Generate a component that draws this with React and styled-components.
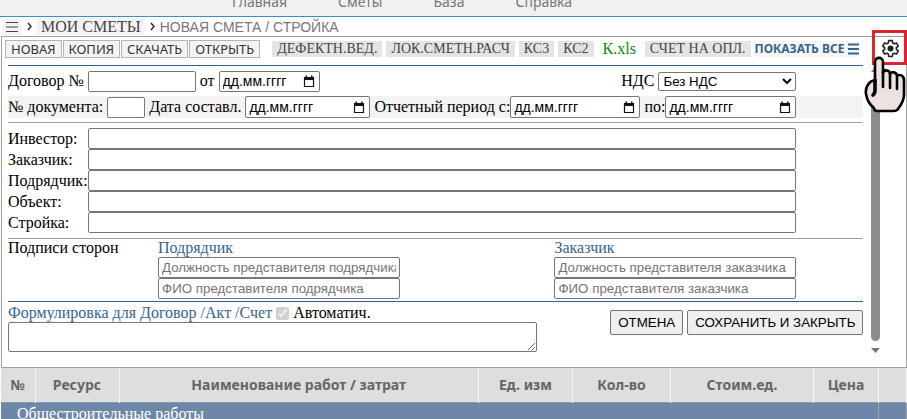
import styled, { createGlobalStyle } from "styled-components";
import React, { useState } from "react";

const GlobalStyle = createGlobalStyle`
  * {
    box-sizing: border-box;
  }
  body {
    margin: 0;
    background: #fff;
    color: #000;
    font-family: "Liberation Serif", serif;
    font-size: 16px;
  }
  input, select, textarea, button {
    margin: 0;
    font-family: "Liberation Sans", sans-serif;
  }
`;
const Page = styled.div`
  height: 100vh;
  overflow: hidden;
`;
const Nav = styled.nav`
  display: flex;
  align-items: flex-end;
  gap: 51px;
  height: 17px;
  padding: 0 0 4px 232px;
  background: #f1f1f1;
  border-bottom: 1px solid #3a8fc0;
`;
const NavLink = styled.a`
  font-family: "Noto Sans", sans-serif;
  font-size: 14px;
  line-height: 20px;
  color: #777;
  text-decoration: none;
`;
const Crumbs = styled.div`
  display: flex;
  align-items: center;
  gap: 5px;
  height: 19px;
  padding-left: 2px;
`;
const CrumbLink = styled.a`
  display: flex;
  align-items: center;
  height: 17px;
  padding: 0 4px;
  background: #f3f3f3;
  color: #444;
  text-decoration: none;
`;
const CrumbText = styled.span`
  font-family: "Liberation Sans", sans-serif;
  font-size: 14px;
  color: #777;
`;
const Panel = styled.section`
  position: relative;
  display: flex;
  margin-left: 1px;
  border: 1px solid #a0a0a0;
`;
const Body = styled.form`
  flex: 1;
  padding: 3px 8px 15px 6px;
`;
const Toolbar = styled.div`
  display: flex;
  align-items: center;
  gap: 4px;
  height: 18px;
  margin: 0 -6px 7px -3px;
`;
const ToolButtons = styled.div`
  display: flex;
  gap: 1px;
  margin-right: 8px;
`;
const ToolButton = styled.button`
  height: 18px;
  padding: 0 5px;
  background: #f3f3f3;
  border: 1px solid #b4b4b4;
  color: #333;
  font-family: "Noto Sans", sans-serif;
  font-size: 13px;
  line-height: 16px;
`;
const DocLink = styled.a`
  height: 16px;
  padding: 0 5px;
  background: ${(props) => (props.$plain ? "transparent" : "#e4e4e4")};
  color: ${(props) => (props.$plain ? "#0a8a0a" : "#444")};
  font-size: ${(props) => (props.$plain ? "16px" : "14px")};
  line-height: 16px;
  white-space: nowrap;
  text-decoration: none;
`;
const ShowAll = styled.button`
  display: flex;
  align-items: center;
  gap: 4px;
  padding: 0;
  border: 0;
  background: #f6f6f6;
  color: #36648f;
  font-family: "Noto Sans", sans-serif;
  font-size: 12px;
  font-weight: bold;
  line-height: 16px;
  white-space: nowrap;
`;
const Rule = styled.hr`
  height: 1px;
  margin: 0;
  border: 0;
  background: ${(props) => (props.$blue ? "#3a6088" : "#a0a0a0")};
`;
const Row = styled.div`
  display: flex;
  align-items: center;
  gap: 4px;
  height: 22px;
  margin: 4px 0;
  padding-right: 67px;
  background: ${(props) => (props.$shaded ? "#f3f3f3" : "transparent")};
  white-space: nowrap;
`;
const Pair = styled.div`
  display: flex;
  align-items: center;
  gap: ${(props) => (props.$gap ? props.$gap : 0)}px;
  margin-left: ${(props) => (props.$end ? "auto" : 0)};
`;
const TextInput = styled.input`
  width: ${(props) => (props.$width ? props.$width + "px" : "100%")};
  height: 21px;
  padding: 1px 3px;
  background: #fff;
  border: 1px solid #767676;
  border-radius: 2px;
  &::placeholder {
    color: #757575;
  }
`;
const DateBox = styled.span`
  display: flex;
  align-items: center;
  width: ${(props) => props.$width}px;
  height: ${(props) => (props.$tall ? 22 : 21)}px;
  padding: 0 4px 0 3px;
  background: #fff;
  border: 1px solid #767676;
  border-radius: 2px;
`;
const DateInput = styled.input`
  flex: 1;
  min-width: 0;
  padding: 0;
  border: 0;
  background: none;
  outline: none;
  font-size: 14px;
  &::placeholder {
    color: #000;
  }
`;
const Select = styled.select`
  width: 138px;
  height: 19px;
  background: #fff;
  border: 1px solid #767676;
  border-radius: 2px;
`;
const Parties = styled.div`
  display: grid;
  grid-template-columns: 80px 1fr;
  grid-auto-rows: 21px;
  align-items: center;
  margin: 5px 67px 5px 0;
  white-space: nowrap;
`;
const Signatures = styled.div`
  display: flex;
  height: 62px;
  padding-right: 67px;
`;
const SignTitle = styled.div`
  width: 150px;
  line-height: 18px;
`;
const SignColumn = styled.div`
  width: 242px;
  margin-left: ${(props) => (props.$end ? "auto" : 0)};
`;
const Blue = styled.div`
  color: #36648f;
  line-height: 18px;
`;
const Footer = styled.div`
  display: flex;
  justify-content: space-between;
`;
const Wording = styled.div`
  width: 529px;
`;
const WordingHead = styled.div`
  display: flex;
  align-items: center;
  gap: 4px;
  height: 20px;
  padding-top: 2px;
`;
const Checkbox = styled.input`
  width: 13px;
  height: 13px;
`;
const TextArea = styled.textarea`
  display: block;
  width: 100%;
  height: 30px;
  border: 1px solid #767676;
  border-radius: 2px;
`;
const Actions = styled.div`
  display: flex;
  gap: 4px;
  padding-top: 8px;
`;
const ActionButton = styled.button`
  height: 25px;
  padding: 0 7px;
  background: #efefef;
  border: 1px solid #767676;
  border-radius: 2px;
  color: #000;
`;
const Scrollbar = styled.div`
  display: flex;
  flex-direction: column;
  align-items: center;
  gap: 7px;
  width: 9px;
  margin: 30px 26px 14px 0;
`;
const Thumb = styled.div`
  flex: 1;
  width: 9px;
  border-radius: 5px;
  background: #8b8b8b;
`;
const SettingsButton = styled.button`
  position: absolute;
  top: -7px;
  right: -1px;
  display: flex;
  align-items: center;
  justify-content: center;
  width: 35px;
  height: 35px;
  padding: 2px 0 0 2px;
  background: none;
  border: 3px solid #e0222d;
`;
const Pointer = styled.svg`
  position: absolute;
  top: 19px;
  right: 0;
`;
const Table = styled.table`
  width: calc(100% - 1px);
  margin-left: 1px;
  border-collapse: collapse;
  table-layout: fixed;
`;
const HeadCell = styled.th`
  width: ${(props) => (props.$width ? props.$width + "px" : "auto")};
  height: 34px;
  padding: 0;
  background: #dedede;
  border-right: 1px solid #f4f4f4;
  color: #666;
  font-family: "Noto Sans", sans-serif;
  font-size: 14px;
`;
const GroupCell = styled.td`
  height: 24px;
  padding: 0 0 0 16px;
  background: #6d87a9;
  border-top: 1px solid #8d99a5;
  border-right: 1px solid #a0a0a0;
  color: #fff;
  line-height: 20px;
`;

const navItems = ["Главная", "Сметы", "База", "Справка"];
const tools = ["НОВАЯ", "КОПИЯ", "СКАЧАТЬ", "ОТКРЫТЬ"];
const documents = [
  { text: "ДЕФЕКТН.ВЕД." },
  { text: "ЛОК.СМЕТН.РАСЧ" },
  { text: "КС3" },
  { text: "КС2" },
  { text: "К.xls", plain: true },
  { text: "СЧЕТ НА ОПЛ." },
];
const parties = ["Инвестор", "Заказчик", "Подрядчик", "Объект", "Стройка"];
const columns = [
  { text: "№", width: 34 },
  { text: "Ресурс", width: 84 },
  { text: "Наименование работ / затрат" },
  { text: "Ед. изм", width: 94 },
  { text: "Кол-во", width: 98 },
  { text: "Стоим.ед.", width: 143 },
  { text: "Цена", width: 65 },
  { text: "", width: 28 },
];

const MenuIcon = ({ size, color, weight }) => (
  <svg width={size} height="12" viewBox={`0 0 ${size} 12`}>
    <path
      d={`M0 1.5H${size}M0 6H${size}M0 10.5H${size}`}
      stroke={color}
      strokeWidth={weight}
    />
  </svg>
);

const Chevron = () => (
  <svg width="5" height="9" viewBox="0 0 5 9">
    <path d="M1 1L4 4.5L1 8" fill="none" stroke="#222" strokeWidth="1.4" />
  </svg>
);

const CalendarIcon = () => (
  <svg width="12" height="13" viewBox="0 0 12 13">
    <path d="M1.5 2.5h9v9h-9z" fill="none" stroke="#111" strokeWidth="1.2" />
    <path d="M1 2h10v3H1zM2.5 0.5h1.5v2H2.5zM8 0.5h1.5v2H8z" fill="#111" />
  </svg>
);

const GearIcon = () => (
  <svg width="19" height="19" viewBox="0 0 24 24">
    <path
      d="M9.7 2h4.6l.5 3.1 1.8 1 2.9-1.1 2.3 4-2.4 2v2l2.4 2-2.3 4-2.9-1.1-1.8 1-.5 3.1H9.7l-.5-3.1-1.8-1-2.9 1.1-2.3-4 2.4-2v-2l-2.4-2 2.3-4 2.9 1.1 1.8-1z"
      fill="#fff"
      stroke="#222"
      strokeWidth="2"
      strokeLinejoin="round"
    />
    <circle cx="12" cy="12" r="3.8" fill="#222" />
  </svg>
);

const HandPointer = () => (
  <Pointer width="42" height="58" viewBox="0 0 42 58">
    <path
      d="M11 25V6c0-5.500 8-5.500 8 0v11c1-4 7-3 7 1 1-3 7-2 7 2 2-2 7-1 7 4v15c0 6-3 10-6 14-1 2-3 2-5 2H13c-2 0-3-1-3-3-4-3-7-8-8-14-1-7 3-13 9-14z"
      fill="#ece2e2"
      stroke="#000"
      strokeWidth="2.6"
      strokeLinejoin="round"
    />
    <path
      d="M19 16v15M26 18v14M33 21v12"
      fill="none"
      stroke="#000"
      strokeWidth="2.6"
      strokeLinecap="round"
    />
    <path
      d="M11 24v11c0 2-1 3-2 4"
      fill="none"
      stroke="#000"
      strokeWidth="3.6"
      strokeLinecap="round"
    />
  </Pointer>
);

const DateField = ({ id, label, width, tall, gap, end }) => (
  <Pair $gap={gap} $end={end}>
    <label htmlFor={id}>{label}</label>
    <DateBox $width={width} $tall={tall}>
      <DateInput id={id} placeholder="дд.мм.гггг" />
      <CalendarIcon />
    </DateBox>
  </Pair>
);

const App = () => {
  const [vat, setVat] = useState("none");

  return (
    <Page>
      <GlobalStyle />
      <Nav>
        {navItems.map((item) => (
          <NavLink href="#" key={item}>
            {item}
          </NavLink>
        ))}
      </Nav>
      <Crumbs>
        <CrumbLink href="#" aria-label="Меню">
          <MenuIcon size={12} color="#444" weight={1} />
        </CrumbLink>
        <Chevron />
        <CrumbLink href="#">МОИ СМЕТЫ</CrumbLink>
        <Chevron />
        <CrumbText>НОВАЯ СМЕТА / СТРОЙКА</CrumbText>
      </Crumbs>

      <Panel>
        <Body onSubmit={(e) => e.preventDefault()}>
          <Toolbar>
            <ToolButtons>
              {tools.map((tool) => (
                <ToolButton type="button" key={tool}>
                  {tool}
                </ToolButton>
              ))}
            </ToolButtons>
            {documents.map((doc) => (
              <DocLink href="#" key={doc.text} $plain={doc.plain}>
                {doc.text}
              </DocLink>
            ))}
            <ShowAll type="button">
              ПОКАЗАТЬ ВСЕ
              <MenuIcon size={11} color="#36648f" weight={2} />
            </ShowAll>
          </Toolbar>
          <Rule $blue />

          {/* contract and document */}
          <Row>
            <Pair $gap={4}>
              <label htmlFor="contract">Договор №</label>
              <TextInput id="contract" $width={108} />
            </Pair>
            <DateField id="contractDate" label="от" width={101} gap={4} />
            <Pair $gap={4} $end>
              <label htmlFor="vat">НДС</label>
              <Select
                id="vat"
                value={vat}
                onChange={(e) => setVat(e.target.value)}
              >
                <option value="none">Без НДС</option>
                <option value="20">НДС 20%</option>
              </Select>
            </Pair>
          </Row>
          <Row $shaded>
            <Pair $gap={4}>
              <label htmlFor="docNumber">№ документа:</label>
              <TextInput id="docNumber" $width={38} />
            </Pair>
            <DateField id="docDate" label="Дата составл." width={125} gap={4} tall />
            <DateField id="from" label="Отчетный период с:" width={130} tall end />
            <DateField id="to" label="по:" width={131} tall />
          </Row>
          <Rule />

          <Parties>
            {parties.map((name) => (
              <React.Fragment key={name}>
                <label htmlFor={name}>{name}:</label>
                <TextInput id={name} />
              </React.Fragment>
            ))}
          </Parties>
          <Rule />

          {/* signatures */}
          <Signatures>
            <SignTitle>Подписи сторон</SignTitle>
            <SignColumn>
              <Blue>Подрядчик</Blue>
              <TextInput
                aria-label="Должность"
                placeholder="Должность представителя подрядчика"
              />
              <TextInput
                aria-label="ФИО"
                placeholder="ФИО представителя подрядчика"
              />
            </SignColumn>
            <SignColumn $end>
              <Blue>Заказчик</Blue>
              <TextInput
                aria-label="Должность"
                placeholder="Должность представителя заказчика"
              />
              <TextInput
                aria-label="ФИО"
                placeholder="ФИО представителя заказчика"
              />
            </SignColumn>
          </Signatures>
          <Rule $blue />

          <Footer>
            <Wording>
              <WordingHead>
                <Blue as="label" htmlFor="wording">
                  Формулировка для Договор /Акт /Счет
                </Blue>
                <Checkbox type="checkbox" id="auto" defaultChecked disabled />
                <label htmlFor="auto">Автоматич.</label>
              </WordingHead>
              <TextArea id="wording" />
            </Wording>
            <Actions>
              <ActionButton type="button">ОТМЕНА</ActionButton>
              <ActionButton type="submit">СОХРАНИТЬ И ЗАКРЫТЬ</ActionButton>
            </Actions>
          </Footer>
        </Body>
        <Scrollbar>
          <svg width="9" height="5" viewBox="0 0 9 5">
            <path d="M0 5L4.5 0L9 5z" fill="#777" />
          </svg>
          <Thumb />
          <svg width="9" height="5" viewBox="0 0 9 5">
            <path d="M0 0L4.5 5L9 0z" fill="#777" />
          </svg>
        </Scrollbar>
        <SettingsButton type="button" aria-label="Настройки">
          <GearIcon />
        </SettingsButton>
        <HandPointer />
      </Panel>

      <Table>
        <thead>
          <tr>
            {columns.map((column) => (
              <HeadCell key={column.text} $width={column.width}>
                {column.text}
              </HeadCell>
            ))}
          </tr>
        </thead>
        <tbody>
          <tr>
            <GroupCell colSpan={7}>Общестроительные работы</GroupCell>
            <GroupCell />
          </tr>
        </tbody>
      </Table>
    </Page>
  );
};

export default App;
